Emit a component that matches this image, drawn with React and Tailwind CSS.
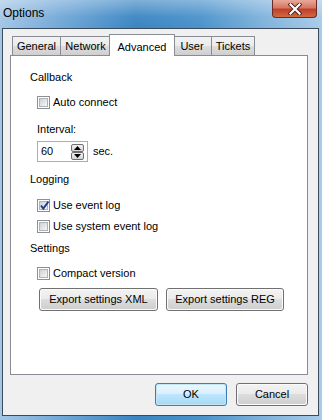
import React from 'react'

const font = { fontFamily: '"Liberation Sans", Arial, sans-serif' }

function CheckBox({ checked, label }) {
    return (
        <div className="flex h-[16px] items-center ml-[7px]">
            <div className="w-[13px] h-[13px] border border-[#8e8f8f] bg-white p-[1px] flex">
                <div className="relative flex-1 border border-[#aeb3b9] bg-gradient-to-br from-[#cdd0d6] to-[#f7f7f7]">
                    {checked && (
                        <svg className="absolute -left-[2px] -top-[3px]" width="13" height="13" viewBox="0 0 13 13">
                            <path d="M3 6.5 L5.3 9.5 L10.5 2.5" fill="none" stroke="#1d3f8f" strokeWidth="2" />
                        </svg>
                    )}
                </div>
            </div>
            <span className="ml-[3px] text-[11px] text-black leading-none">{label}</span>
        </div>
    )
}

function WinButton({ children, width, primary }) {
    return (
        <div
            className={
                'h-[23px] rounded-[3px] border flex p-px ' +
                (primary ? 'border-[#3c7fb1] bg-[#c4e5f6] ' : 'border-[#707070] bg-[#fbfbfb] ')
            }
            style={{ width }}
        >
            <div
                className={
                    'flex-1 rounded-[2px] flex items-center justify-center text-[11px] text-black ' +
                    (primary
                        ? 'bg-[linear-gradient(#eaf6fd_0%,#d9f0fc_45%,#bee6fd_50%,#a7d9f5_100%)]'
                        : 'bg-[linear-gradient(#f2f2f2_0%,#ebebeb_45%,#dddddd_50%,#cfcfcf_100%)]')
                }
            >
                {children}
            </div>
        </div>
    )
}

function Tab({ label, width, selected }) {
    if (selected) {
        return (
            <div
                className="relative z-10 -mx-[2px] -mb-px h-[22px] border border-b-0 border-[#898c95] bg-white flex items-start justify-center pt-[4px] text-[11px] text-black"
                style={{ width }}
            >
                {label}
            </div>
        )
    }
    return (
        <div
            className="h-[19px] -ml-px first:ml-0 border border-b-0 border-[#898c95] bg-[linear-gradient(#f2f2f2,#ebebeb_50%,#dddddd_51%,#cfcfcf)] flex items-center justify-center text-[11px] text-black"
            style={{ width }}
        >
            {label}
        </div>
    )
}

function Spin() {
    return (
        <div className="flex items-center ml-[7px] h-[21px]">
            <div className="w-[51px] h-[21px] border border-[#abadb3] bg-white flex items-center justify-between pl-[3px] pr-[3px]">
                <span className="text-[11px] text-black">60</span>
                <div className="flex flex-col gap-0">
                    {['up', 'down'].map((d) => (
                        <div key={d} className="w-[13px] h-[8px] rounded-[2px] border border-[#707070] bg-[linear-gradient(#f2f2f2,#d4d4d4)] flex items-center justify-center">
                            <svg width="7" height="4" viewBox="0 0 7 4">
                                {d === 'up' ? <path d="M0 4 L3.5 0 L7 4Z" fill="#000" /> : <path d="M0 0 L3.5 4 L7 0Z" fill="#000" />}
                            </svg>
                        </div>
                    ))}
                </div>
            </div>
            <span className="ml-[5px] text-[11px] text-black">sec.</span>
        </div>
    )
}

export default function App() {
    return (
        <div
            className="w-[322px] h-[420px] flex flex-col bg-[linear-gradient(90deg,#a3c6e6_0%,#73a9d8_18%,#3a85c2_42%,#4a92ca_62%,#7fb2dc_82%,#a8cbe9_100%)]"
            style={font}
        >
            <div className="h-[28px] flex items-start justify-between bg-[linear-gradient(rgba(255,255,255,0.35),rgba(255,255,255,0.05)_60%,rgba(255,255,255,0))]">
                <span className="ml-[3px] mt-[4px] text-[12px] text-black">Options</span>
                <div className="mr-[5px] w-[45px] h-[18px] rounded-b-[4px] border border-t-0 border-[#6b2a22] bg-[linear-gradient(#e9a99b_0%,#d77663_45%,#c0402a_55%,#d2693e_100%)] flex items-center justify-center">
                    <svg width="14" height="12" viewBox="0 0 14 12">
                        <path d="M2.5 1.5 L11.5 10.5 M11.5 1.5 L2.5 10.5" stroke="#4a1d16" strokeWidth="4" strokeLinecap="square" />
                        <path d="M2.5 1.5 L11.5 10.5 M11.5 1.5 L2.5 10.5" stroke="#ffffff" strokeWidth="2.2" strokeLinecap="square" />
                    </svg>
                </div>
            </div>

            <div className="ml-[2px] mr-[3px] mb-[4px] flex-1 border border-[#3b4b5c] bg-[#f0f0f0] flex flex-col">
                <div className="ml-[7px] mt-[5px] w-[298px]">
                    <div className="flex items-end h-[21px] pl-[2px]">
                        <Tab label="General" width={49} />
                        <Tab label="Network" width={51} />
                        <Tab label="Advanced" width={66} selected />
                        <Tab label="User" width={40} />
                        <Tab label="Tickets" width={44} />
                    </div>
                    <div className="h-[320px] border border-[#898c95] bg-white pl-[19px] flex flex-col text-black">
                        <div className="mt-[13px] h-[16px] flex items-center text-[11px]">Callback</div>
                        <div className="mt-[9px]"><CheckBox label="Auto connect" /></div>
                        <div className="mt-[11px] h-[16px] flex items-center ml-[7px] text-[11px]">Interval:</div>
                        <div className="mt-[4px]"><Spin /></div>
                        <div className="mt-[9px] h-[16px] flex items-center text-[11px]">Logging</div>
                        <div className="mt-[10px]"><CheckBox label="Use event log" checked /></div>
                        <div className="mt-[5px]"><CheckBox label="Use system event log" /></div>
                        <div className="mt-[6px] h-[16px] flex items-center text-[11px]">Settings</div>
                        <div className="mt-[9px]"><CheckBox label="Compact version" /></div>
                        <div className="mt-[7px] ml-[9px] flex gap-[8px]">
                            <WinButton width={119}>Export settings XML</WinButton>
                            <WinButton width={118}>Export settings REG</WinButton>
                        </div>
                    </div>
                </div>
                <div className="mt-[8px] ml-[152px] flex gap-[9px]">
                    <WinButton width={72} primary>OK</WinButton>
                    <WinButton width={72}>Cancel</WinButton>
                </div>
            </div>
        </div>
    )
}
